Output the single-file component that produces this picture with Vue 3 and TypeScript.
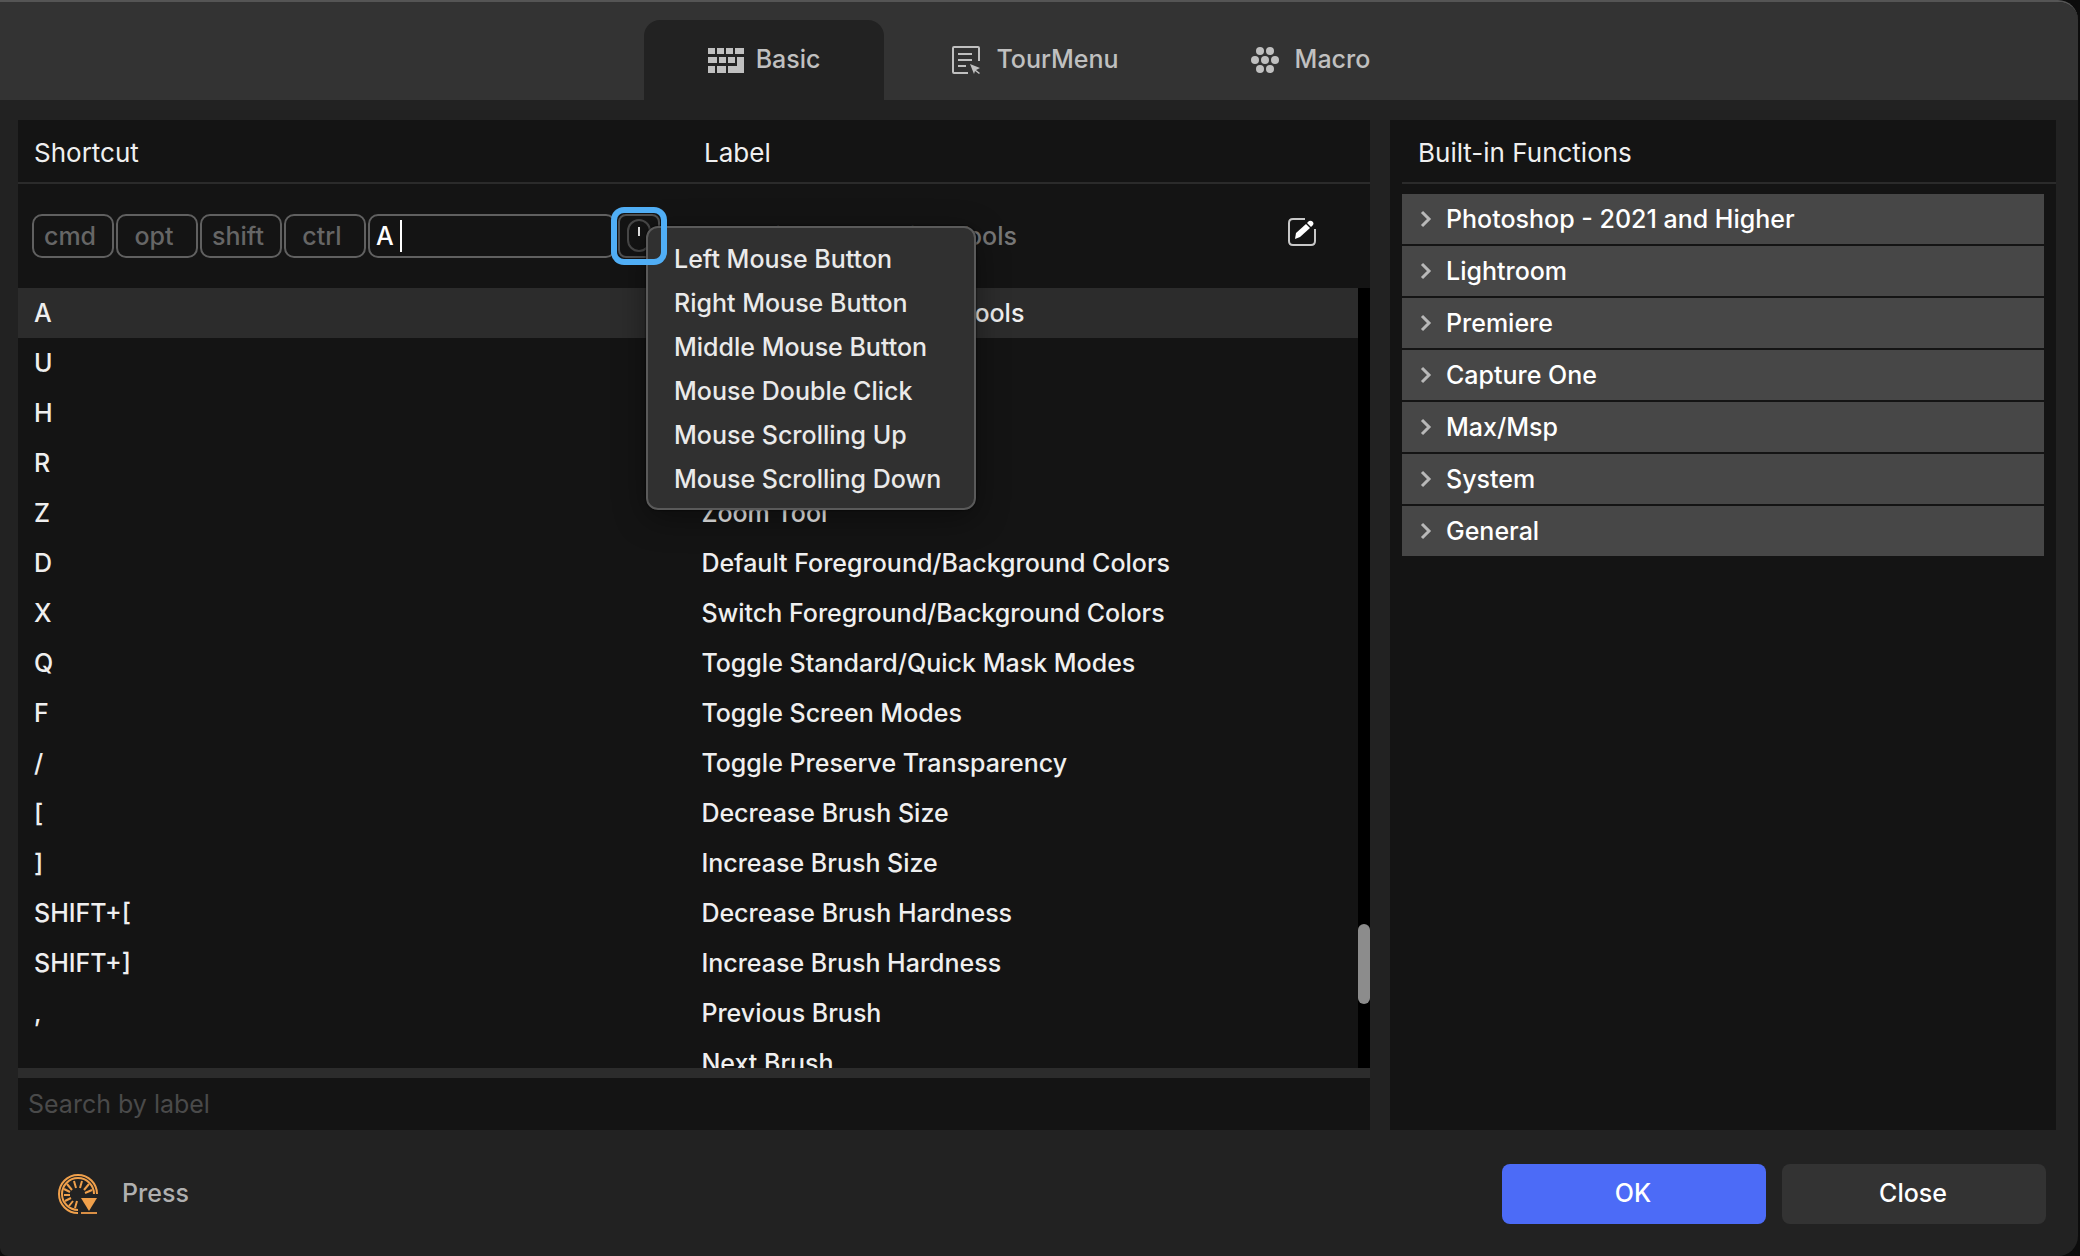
<script setup lang="ts">
import { ref } from 'vue'

interface Shortcut {
  keys: string
  label: string
}

const modifiers: string[] = ['cmd', 'opt', 'shift', 'ctrl']

const shortcuts: Shortcut[] = [
  { keys: 'A', label: 'Path/Direct Selection Tools' },
  { keys: 'U', label: 'Shape Tools' },
  { keys: 'H', label: 'Hand Tool' },
  { keys: 'R', label: 'Rotate Tool' },
  { keys: 'Z', label: 'Zoom Tool' },
  { keys: 'D', label: 'Default Foreground/Background Colors' },
  { keys: 'X', label: 'Switch Foreground/Background Colors' },
  { keys: 'Q', label: 'Toggle Standard/Quick Mask Modes' },
  { keys: 'F', label: 'Toggle Screen Modes' },
  { keys: '/', label: 'Toggle Preserve Transparency' },
  { keys: '[', label: 'Decrease Brush Size' },
  { keys: ']', label: 'Increase Brush Size' },
  { keys: 'SHIFT+[', label: 'Decrease Brush Hardness' },
  { keys: 'SHIFT+]', label: 'Increase Brush Hardness' },
  { keys: ',', label: 'Previous Brush' },
  { keys: '', label: 'Next Brush' },
]

const mouseActions: string[] = [
  'Left Mouse Button',
  'Right Mouse Button',
  'Middle Mouse Button',
  'Mouse Double Click',
  'Mouse Scrolling Up',
  'Mouse Scrolling Down',
]

const functionGroups: string[] = [
  'Photoshop - 2021 and Higher',
  'Lightroom',
  'Premiere',
  'Capture One',
  'Max/Msp',
  'System',
  'General',
]

const selected = ref(0)
const keyText = ref('A')
const labelText = ref('Path/Direct Selection Tools')
const search = ref('')
const menuOpen = ref(true)

function select(index: number): void {
  selected.value = index
  keyText.value = shortcuts[index].keys
  labelText.value = shortcuts[index].label
}
</script>

<template>
  <div class="window">
    <nav class="tabs" role="tablist">
      <button class="tab active" role="tab" aria-selected="true">
        <svg width="36" height="26" viewBox="0 0 36 26" fill="currentColor" aria-hidden="true">
          <path d="M0 1h7v6H0zM9 1h7v6H9zM18 1h7v6h-7zM27 1h9v6h-9zM0 10h9v6H0zM11 10h7v6h-7zM20 10h7v6h-7zM29 10h7v16H20v-7h9zM0 19h7v7H0zM9 19h9v7H9z" />
        </svg>
        <span>Basic</span>
      </button>
      <button class="tab wide" role="tab" aria-selected="false">
        <svg width="28" height="28" viewBox="0 0 28 28" fill="none" stroke="currentColor" stroke-width="2" aria-hidden="true">
          <path d="M16 27H2q-1 0-1-1V2q0-1 1-1h24q1 0 1 1v13M6 8h14M6 14h14M6 20h8" />
          <path d="M18 18l10 4-4 2 4 3-1 1-4-3-1 3z" fill="currentColor" stroke="none" />
        </svg>
        <span>TourMenu</span>
      </button>
      <button class="tab wide" role="tab" aria-selected="false">
        <svg width="28" height="26" viewBox="0 0 28 26" fill="currentColor" aria-hidden="true">
          <circle cx="9" cy="4" r="4" /><circle cx="19" cy="4" r="4" />
          <circle cx="4" cy="13" r="4" /><circle cx="14" cy="13" r="4" /><circle cx="24" cy="13" r="4" />
          <circle cx="9" cy="22" r="4" /><circle cx="19" cy="22" r="4" />
        </svg>
        <span>Macro</span>
      </button>
    </nav>

    <main class="panels">
      <section class="panel">
        <header class="heading heading-columns">
          <span id="col-shortcut">Shortcut</span>
          <span id="col-label">Label</span>
        </header>

        <div class="editor">
          <div class="keys">
            <button v-for="m in modifiers" :key="m" class="modifier">{{ m }}</button>
            <div class="key-field">
              <input v-model="keyText" class="key-input" aria-labelledby="col-shortcut" />
              <span class="caret"></span>
            </div>
            <div class="mouse">
              <button class="mouse-button" aria-label="Mouse actions" @click="menuOpen = !menuOpen">
                <svg width="24" height="34" viewBox="0 0 24 34" fill="none" aria-hidden="true">
                  <rect x="1" y="1" width="22" height="31" rx="11" stroke="#484848" stroke-width="2" />
                  <path d="M12 8v9" stroke="#e8e8e8" stroke-width="2" />
                </svg>
              </button>
              <ul v-if="menuOpen" class="menu" role="menu">
                <li v-for="a in mouseActions" :key="a" role="none">
                  <button role="menuitem">{{ a }}</button>
                </li>
              </ul>
            </div>
          </div>
          <div class="label-cell">
            <input v-model="labelText" class="label-input" aria-labelledby="col-label" />
            <button class="edit" aria-label="Edit label">
              <svg width="28" height="28" viewBox="0 0 28 28" fill="none" aria-hidden="true">
                <path d="M17 1H5Q1 1 1 5v18q0 4 4 4h18q4 0 4-4V11" stroke="#c8c8c8" stroke-width="2" />
                <path d="M7 21l1-6 10-9 4 4-10 9z" fill="#fff" />
                <path d="M19 5l2-2q2-1 4 1 1 2 0 3l-2 2z" fill="#fff" />
              </svg>
            </button>
          </div>
        </div>

        <div class="list">
          <div class="rows">
            <table aria-label="Shortcuts">
              <colgroup>
                <col class="keys-column" />
                <col />
              </colgroup>
              <tbody>
                <tr v-for="(s, i) in shortcuts" :key="s.label" :class="{ selected: i === selected }" @click="select(i)">
                  <td class="keys-cell">{{ s.keys }}</td>
                  <td>{{ s.label }}</td>
                </tr>
              </tbody>
            </table>
          </div>
          <div class="track"><div class="thumb"></div></div>
        </div>

        <input v-model="search" class="search" type="text" placeholder="Search by label" aria-label="Search by label" />
      </section>

      <section class="panel">
        <header class="heading functions-heading">Built-in Functions</header>
        <ul class="groups">
          <li v-for="g in functionGroups" :key="g">
            <button class="group">
              <svg width="12" height="18" viewBox="0 0 12 18" fill="none" stroke="#b8b8b8" stroke-width="3" aria-hidden="true">
                <path d="M2 2l7 7-7 7" />
              </svg>
              {{ g }}
            </button>
          </li>
        </ul>
      </section>
    </main>

    <footer class="footer">
      <svg width="40" height="40" viewBox="0 0 40 40" fill="none" stroke="#f0a04b" aria-hidden="true">
        <path d="M39 20A19 19 0 1 0 20 39" stroke-width="2" />
        <path d="M36 20A16 16 0 1 0 20 36" stroke-width="2" />
        <path
          d="M18 14L16 7M22 14l2-7M26 16l5-6M14 16L9 10M27 19l7-3M12 18L6 15M12 21H6M13 24l-6 3M15 27l-4 5M19 27l-2 7"
          stroke-width="2"
        />
        <path d="M23 24h16l-8 13z" fill="#f0a04b" stroke="none" />
        <path d="M23 39h16" stroke="#d98f45" stroke-width="2" />
      </svg>
      <span class="action">Press</span>
      <button class="command primary">OK</button>
      <button class="command">Close</button>
    </footer>
  </div>
</template>

<style>
body {
  margin: 0;
  background: #0c0c0c;
}
</style>

<style scoped>
.window {
  box-sizing: border-box;
  display: flex;
  flex-direction: column;
  height: 100vh;
  margin-right: 2px;
  overflow: hidden;
  border-top: 2px solid #555;
  border-radius: 0 20px 20px 8px;
  background: #222;
  color: #efefef;
  font: 500 25px/32px Inter, "Noto Sans", sans-serif;
}

button,
input {
  box-sizing: border-box;
  margin: 0;
  padding: 0;
  border: 0;
  outline: 0;
  background: none;
  color: inherit;
  font: inherit;
}

ul {
  margin: 0;
  padding: 0;
  list-style: none;
}

svg {
  flex: none;
}

.tabs {
  display: flex;
  justify-content: center;
  gap: 4px;
  height: 80px;
  padding-top: 18px;
  background: #333;
}

.tab {
  display: flex;
  align-items: center;
  gap: 12px;
  padding: 0 64px;
  border-radius: 16px 16px 0 0;
  color: #c0c0c0;
}

.tab span {
  padding-bottom: 2px;
}

.tab.wide {
  gap: 16px;
}

.tab.active {
  background: #222;
}

.panels {
  display: grid;
  grid-template-columns: 1352fr 666fr;
  gap: 20px;
  flex: 1;
  min-height: 0;
  padding: 20px 22px 0 18px;
}

.panel {
  display: flex;
  flex-direction: column;
  min-width: 0;
  min-height: 0;
  background: #141414;
}

.heading {
  padding: 17px 0 13px 16px;
  border-bottom: 2px solid #2b2b2b;
  font-size: 26px;
  font-weight: 400;
}

.heading-columns {
  display: grid;
  grid-template-columns: 1fr 1fr;
  column-gap: 4px;
}

.editor {
  display: grid;
  grid-template-columns: 1fr 1fr;
  align-items: center;
  height: 104px;
}

.keys {
  display: flex;
  gap: 2px;
  padding: 0 34px 0 14px;
}

.modifier {
  width: 82px;
  height: 44px;
  padding-right: 6px;
  border: 2px solid #606060;
  border-radius: 10px;
  color: #666;
}

.key-field {
  box-sizing: border-box;
  display: flex;
  flex: 1;
  align-items: center;
  height: 44px;
  padding-left: 6px;
  border: 2px solid #606060;
  border-radius: 10px;
  color: #fff;
}

.key-input {
  width: 24px;
}

.caret {
  width: 2px;
  height: 32px;
  background: #fff;
}

.mouse {
  position: relative;
}

.mouse::after {
  position: absolute;
  inset: -1px;
  z-index: 3;
  border-radius: 7px;
  box-shadow: 0 0 0 6px #50aef5;
  content: "";
  pointer-events: none;
}

.mouse-button {
  display: flex;
  align-items: center;
  justify-content: center;
  width: 42px;
  height: 44px;
  border: 2px solid #505050;
  border-radius: 8px;
}

.menu {
  position: absolute;
  top: 12px;
  left: 28px;
  z-index: 2;
  box-sizing: border-box;
  width: 330px;
  padding: 9px 0 7px;
  border: 2px solid #5a5a5a;
  border-radius: 12px;
  background: #303030;
  box-shadow: 0 8px 32px rgba(0, 0, 0, 0.4), 0 0 2px #000;
  color: #eaeaea;
}

.menu button {
  width: 100%;
  height: 44px;
  padding-left: 26px;
  text-align: left;
}

.label-cell {
  display: flex;
  align-items: center;
  justify-content: space-between;
  padding-right: 54px;
}

.label-input {
  width: 420px;
  color: #777;
}

.edit {
  display: flex;
  padding-bottom: 8px;
}

.list {
  display: flex;
  flex: 1;
  min-height: 0;
}

.rows {
  flex: 1;
  overflow: hidden;
}

table {
  width: 100%;
  border-collapse: collapse;
  table-layout: fixed;
}

.keys-column {
  width: 51%;
}

td {
  height: 50px;
  padding: 0;
}

.keys-cell {
  padding-left: 16px;
}

.selected {
  background: #2c2c2c;
}

.track {
  display: flex;
  flex-direction: column;
  width: 12px;
  background: #000;
}

.track::before {
  flex: 636;
  content: "";
}

.track::after {
  flex: 64;
  content: "";
}

.thumb {
  height: 80px;
  border-radius: 6px;
  background: #8c8c8c;
}

.search {
  height: 62px;
  padding: 0 10px;
  border-top: 10px solid #2c2c2c;
  font-weight: 400;
}

.search::placeholder {
  color: #4a4a4a;
  opacity: 1;
}

.functions-heading {
  margin-left: 12px;
}

.groups {
  display: flex;
  flex-direction: column;
  gap: 2px;
  padding: 10px 12px;
}

.group {
  display: flex;
  align-items: center;
  gap: 14px;
  width: 100%;
  height: 50px;
  padding-left: 18px;
  background: #474747;
  color: #fff;
}

.footer {
  display: flex;
  align-items: center;
  gap: 16px;
  padding: 34px 32px 32px 58px;
}

.action {
  flex: 1;
  padding: 0 0 2px 8px;
  color: #b0b0b0;
}

.command {
  width: 264px;
  height: 60px;
  padding: 0 2px 2px 0;
  border-radius: 8px;
  background: #333;
  color: #fff;
}

.primary {
  background: #4c6bf7;
}
</style>
